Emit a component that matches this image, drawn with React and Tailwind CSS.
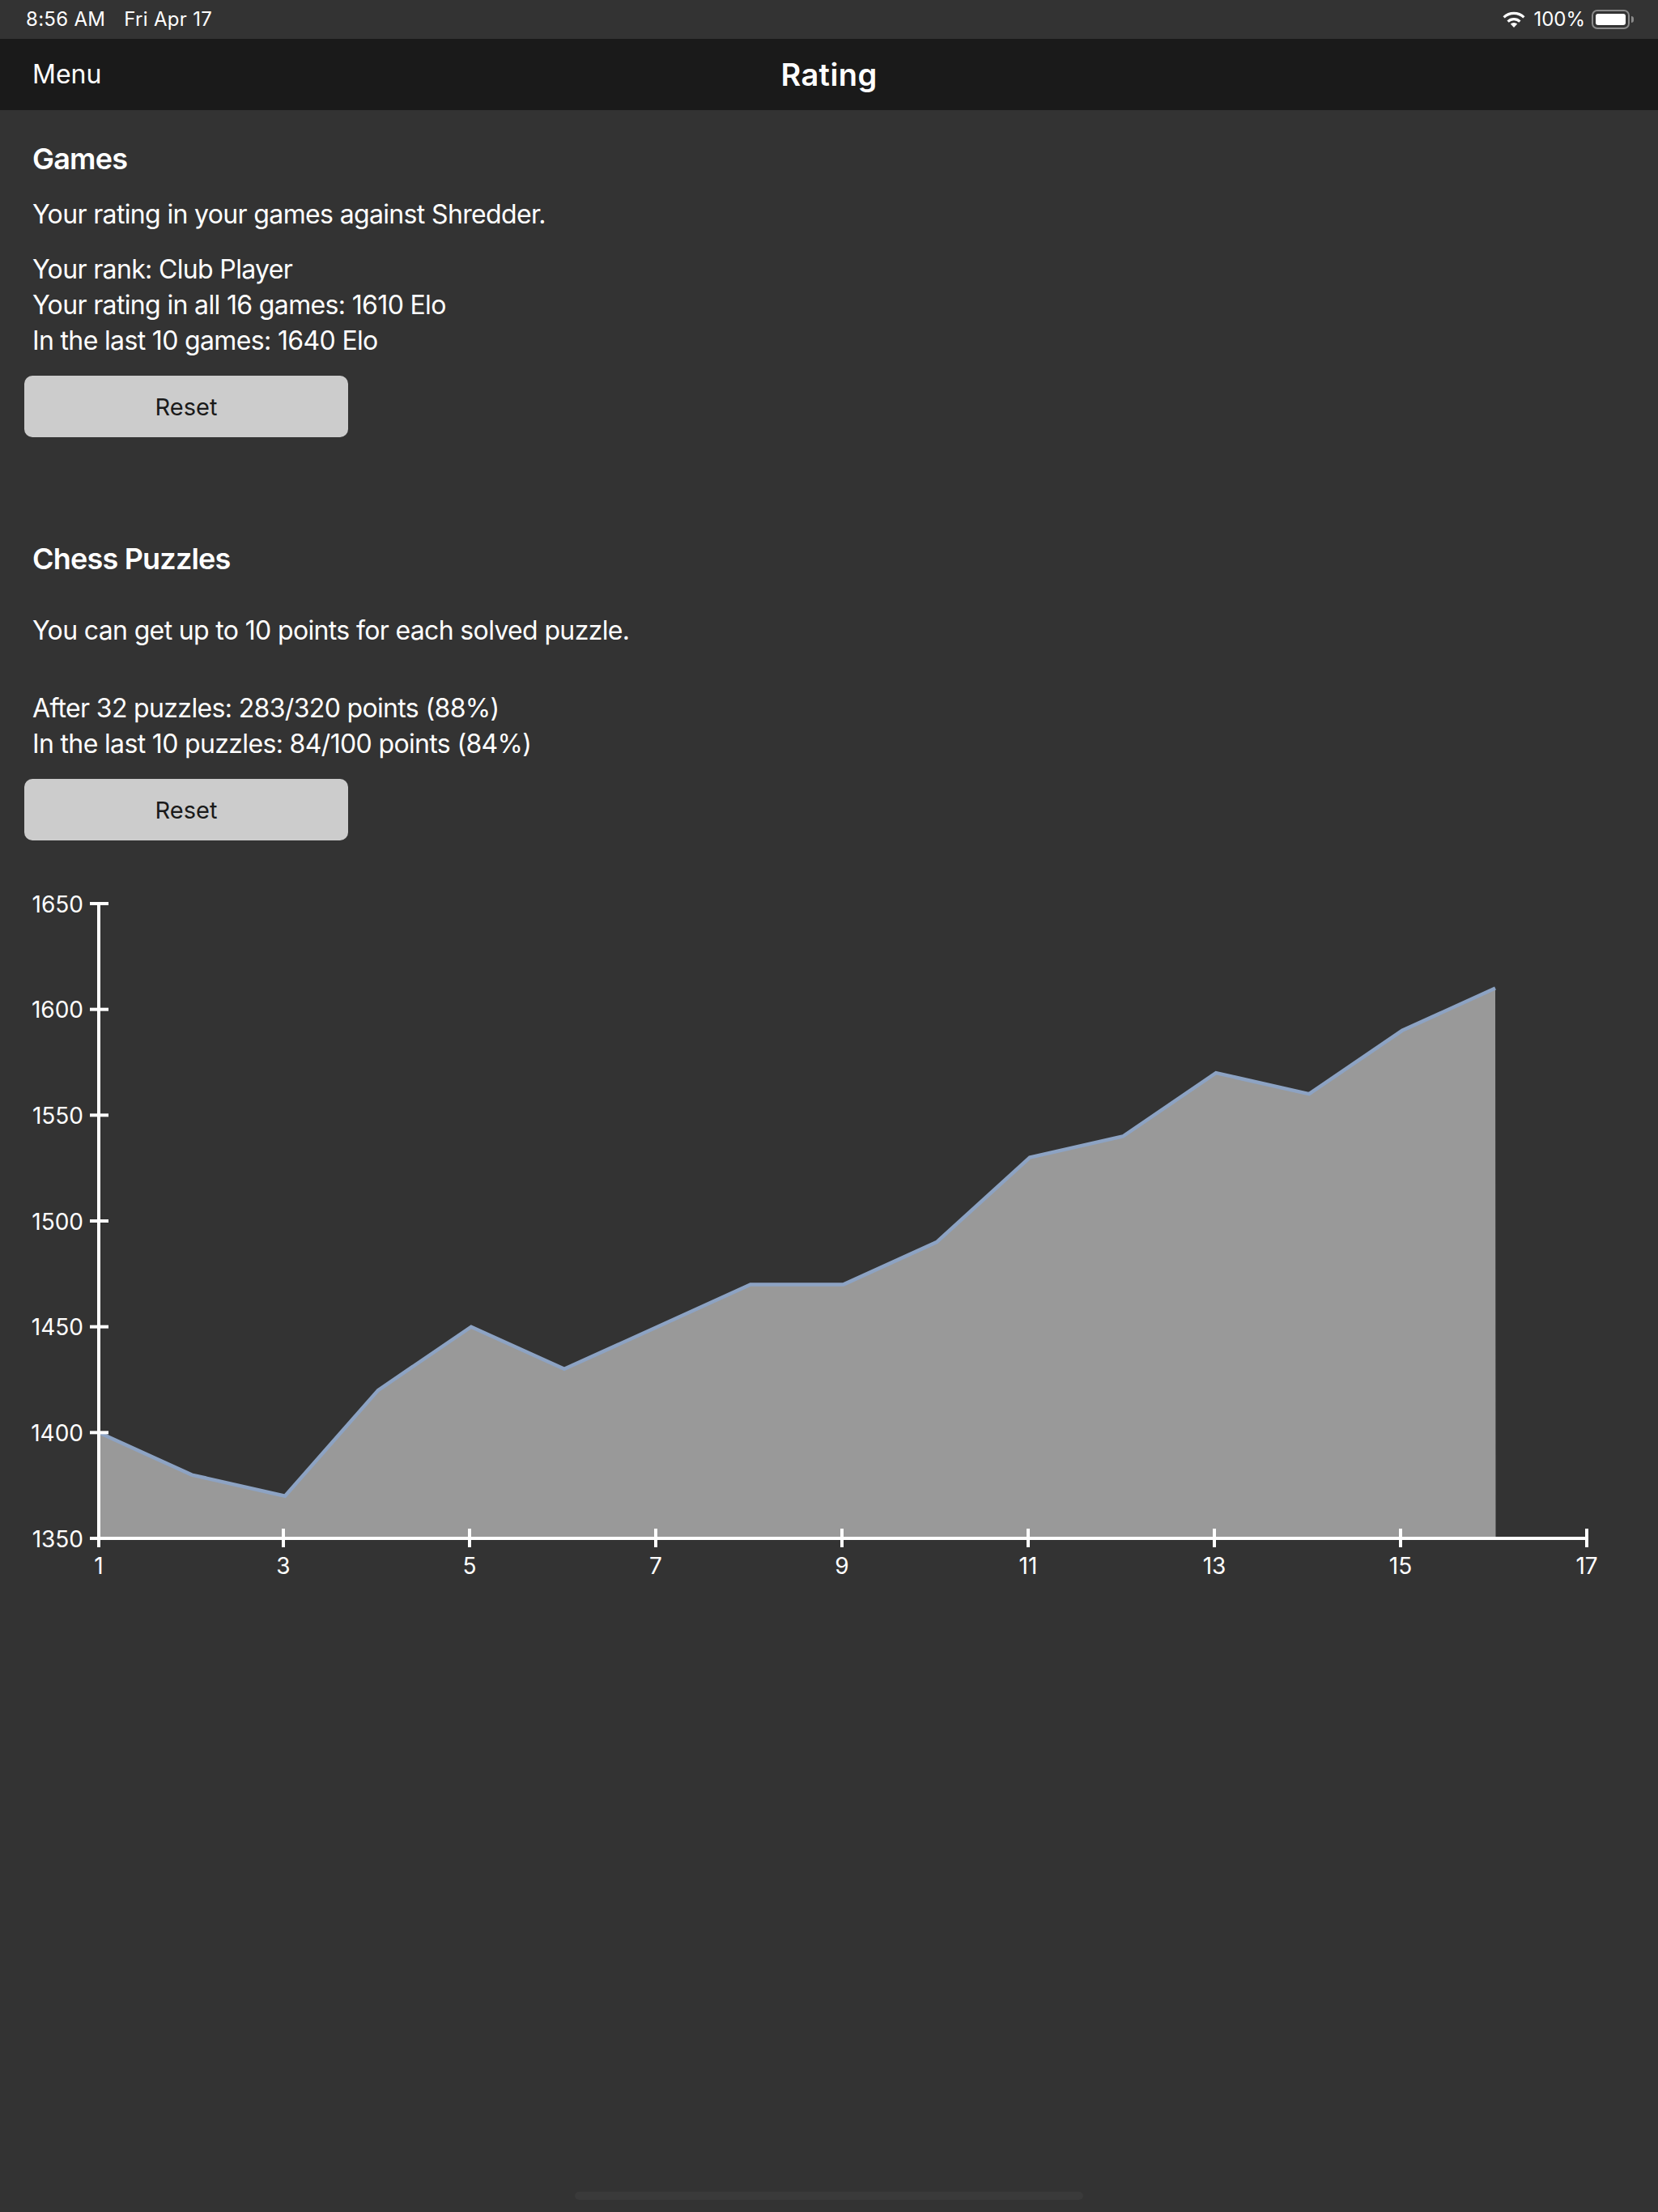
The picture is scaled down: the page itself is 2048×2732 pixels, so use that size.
import React from "react";

const ratings = [1400, 1380, 1370, 1420, 1450, 1430, 1450, 1470, 1470, 1490, 1530, 1540, 1570, 1560, 1590, 1610];
const yTicks = [1650, 1600, 1550, 1500, 1450, 1400, 1350];
const xTicks = [3, 5, 7, 9, 11, 13, 15, 17];

const yFor = (v) => 1900 - (v - 1350) * 2.6133;
const points = ratings.map((v, i) => `${122 + i * 115},${yFor(v).toFixed(1)}`).join(" ");

const ResetButton = () => (
  <button className="ml-[30px] block w-[400px] h-[76px] pt-[2px] rounded-[10px] bg-[#cccccc] text-[29px] text-[#1a1a1a]">
    Reset
  </button>
);

const RatingChart = () => (
  <svg className="block mt-[52px]" width="2048" height="880" viewBox="0 1090 2048 880">
    <polygon points={`122,1900 ${points} 1847.5,1900`} fill="#999999" />
    <polyline points={points} fill="none" stroke="#8da3c3" strokeWidth="4.5" />
    <rect x="120" y="1116" width="4" height="784" fill="#ffffff" />
    <rect x="111" y="1898" width="1851" height="4" fill="#ffffff" />
    {yTicks.map((t) => (
      <g key={t}>
        <rect x="111" y={yFor(t) - 2} width="23" height="4" fill="#ffffff" />
        <text x="103" y={yFor(t) + 10.5} textAnchor="end" fill="#ffffff" fontSize="28">
          {t}
        </text>
      </g>
    ))}
    <rect x="120" y="1888" width="4" height="23" fill="#ffffff" />
    <text x="122" y="1944" textAnchor="middle" fill="#ffffff" fontSize="28">
      1
    </text>
    {xTicks.map((t) => {
      const x = 120 + (t - 1) * 115;
      return (
        <g key={t}>
          <rect x={x - 2} y="1888" width="4" height="23" fill="#ffffff" />
          <text x={x} y="1944" textAnchor="middle" fill="#ffffff" fontSize="28">
            {t}
          </text>
        </g>
      );
    })}
  </svg>
);

const App = () => {
  return (
    <div className="w-[2048px] h-[2732px] flex flex-col bg-[#333333] text-white font-['Inter',sans-serif]">
      {/* status bar */}
      <div className="h-[48px] flex items-center justify-between pl-[32px] pr-[30px] text-[24px]">
        <div className="flex gap-x-[23px] tracking-[0.3px]">
          <span>8:56 AM</span>
          <span>Fri Apr 17</span>
        </div>
        <div className="flex items-center">
          <svg width="30" height="22" viewBox="0 0 30 22" className="mr-[9px]">
            <path d="M15 21l-4.2-4.4a6 6 0 0 1 8.4 0z" fill="#ffffff" />
            <path d="M7.6 13.6a10.6 10.6 0 0 1 14.8 0" fill="none" stroke="#ffffff" strokeWidth="3.2" />
            <path d="M2.6 8.4a17.8 17.8 0 0 1 24.8 0" fill="none" stroke="#ffffff" strokeWidth="3.2" />
          </svg>
          <span>100%</span>
          <div className="ml-[8px] w-[47px] h-[24px] p-[3px] rounded-[7px] border-2 border-[#8a8a8a]">
            <div className="w-full h-full rounded-[3px] bg-white"></div>
          </div>
          <div className="ml-[2px] w-[3px] h-[8px] rounded-r-[3px] bg-[#8a8a8a]"></div>
        </div>
      </div>

      {/* nav bar */}
      <div className="h-[88px] flex items-center justify-between px-[40px] bg-[#1a1a1a]">
        <span className="text-[32px] w-[200px]">Menu</span>
        <span className="text-[38px] font-semibold tracking-[0.4px]">Rating</span>
        <span className="w-[200px]"></span>
      </div>

      {/* games */}
      <div className="pl-[40px] pt-[38px] text-[32px] leading-[44px] tracking-[-0.65px]">
        <h2 className="text-[36px] font-semibold tracking-[-0.8px]">Games</h2>
        <p className="mt-[25px]">Your rating in your games against Shredder.</p>
        <p className="mt-[24px]">Your rank: Club Player</p>
        <p>Your rating in all 16 games: 1610 Elo</p>
        <p>In the last 10 games: 1640 Elo</p>
      </div>
      <div className="mt-[21px]">
        <ResetButton />
      </div>

      {/* puzzles */}
      <div className="pl-[40px] pt-[128px] text-[32px] leading-[44px] tracking-[-0.65px]">
        <h2 className="text-[36px] font-semibold tracking-[-0.8px]">Chess Puzzles</h2>
        <p className="mt-[45px]">You can get up to 10 points for each solved puzzle.</p>
        <p className="mt-[52px]">After 32 puzzles: 283/320 points (88%)</p>
        <p>In the last 10 puzzles: 84/100 points (84%)</p>
      </div>
      <div className="mt-[21px]">
        <ResetButton />
      </div>

      <RatingChart />

      {/* home indicator */}
      <div className="mt-auto mx-auto mb-[15px] w-[628px] h-[10px] rounded-full bg-[#3a3a3a]"></div>
    </div>
  );
};

export default App;
